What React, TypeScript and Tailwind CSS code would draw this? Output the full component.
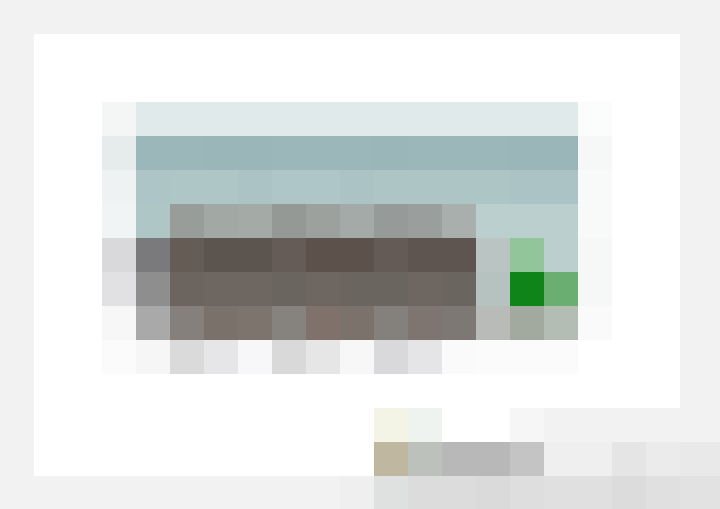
import React from 'react';

// Blurred preview thumbnail, sampled as a 34px mosaic (rows top to bottom)
const PREVIEW: string[][] = [
  ['#f4f6f6', '#e1eaea', '#e1eaea', '#e1eaea', '#e1eaea', '#e1eaea', '#e1eaea', '#e1eaea', '#e1eaea', '#e1eaea', '#e1eaea', '#e1eaea', '#e1eaea', '#e1eaea', '#fbfcfc'],
  ['#e6ecec', '#9cb7ba', '#9cb7ba', '#9bb6b9', '#9bb6b9', '#9cb7ba', '#9cb7ba', '#9cb7ba', '#9bb6b9', '#9cb7ba', '#9cb7ba', '#9cb7ba', '#9bb6b9', '#9bb6b9', '#f6f8f8'],
  ['#eef2f2', '#adc5c6', '#aec6c6', '#aec6c6', '#abc3c4', '#aec6c7', '#aec6c7', '#abc3c4', '#aec5c6', '#aec5c6', '#aec5c6', '#aec5c6', '#abc3c4', '#abc3c4', '#f8f9f9'],
  ['#f0f4f4', '#aec6c6', '#999d9a', '#a2a8a4', '#a4aaa6', '#949995', '#9ca19e', '#a4aaa8', '#969a98', '#9a9e9c', '#a9afad', '#bccfcf', '#bccfcf', '#bccfcf', '#f8f9f9'],
  ['#d9d9db', '#7a7a7c', '#655c56', '#5c544f', '#5c544f', '#655c57', '#5c524b', '#5c524b', '#645b56', '#5e5550', '#5e5550', '#b9c4c3', '#93c59a', '#bccfcf', '#f6f7f7'],
  ['#e1e1e3', '#8e8e8e', '#6c645f', '#6d6661', '#6d6661', '#6b6560', '#6d6661', '#6b6560', '#6b6560', '#6d6661', '#6b6560', '#b6c2c0', '#0f8418', '#6aae72', '#f6f7f7'],
  ['#f7f7f7', '#a9a9a9', '#86807c', '#7b716b', '#7e746e', '#86827e', '#80726b', '#7b726c', '#84807c', '#7e7470', '#7e7874', '#b9bbb8', '#a2aa9f', '#b3bdb3', '#fafafa'],
  ['#fbfbfb', '#f6f6f6', '#dadada', '#e6e6e8', '#f7f7f9', '#d9d9d9', '#e6e6e6', '#f7f7f7', '#d9d9db', '#e5e5e7', '#fafafa', '#fbfbfb', '#fbfbfb', '#fbfbfb', '#ffffff'],
];

// Floating toolbar strip in the lower right corner
const TOOLBAR: string[][] = [
  ['#f4f4e6', '#eef3f0', '#ffffff', '#ffffff', '#f6f6f6', '#f2f2f2', '#f2f2f2', '#f2f2f2', '#f2f2f2', '#f2f2f2'],
  ['#bfb79f', '#bcc1bb', '#b8b8b8', '#b8b8b8', '#c4c4c4', '#efefef', '#efefef', '#e5e5e5', '#ebebeb', '#e9e9e9'],
  ['#dfe0e0', '#dcdcdc', '#dcdcdc', '#dadada', '#dedede', '#e0e0e0', '#e0e0e0', '#dcdcdc', '#e0e0e0', '#e2e2e2'],
];

function Mosaic({ cells, cell, lastWidth }: { cells: string[][]; cell: number; lastWidth?: number }) {
  const cols = cells[0].length;
  const lw = lastWidth ?? cell;
  const width = (cols - 1) * cell + lw;
  const height = cells.length * cell;
  return (
    <svg width={width} height={height} viewBox={`0 0 ${width} ${height}`} className="block" shapeRendering="crispEdges">
      {cells.map((row, r) =>
        row.map((fill, c) => (
          <rect
            key={`${r}-${c}`}
            x={c * cell}
            y={r * cell}
            width={c === cols - 1 ? lw : cell}
            height={cell}
            fill={fill}
          />
        ))
      )}
    </svg>
  );
}

export default function App() {
  return (
    <div className="relative w-[720px] h-[509px] overflow-hidden bg-[#f2f2f2] font-['Liberation_Sans',sans-serif]">
      <div className="pt-[34px] pl-[34px]">
        {/* Main panel */}
        <div className="w-[646px] h-[442px] bg-white pt-[68px] pl-[68px]">
          <figure className="m-0">
            <Mosaic cells={PREVIEW} cell={34} />
          </figure>
        </div>
      </div>

      {/* Overlay toolbar */}
      <div className="absolute left-[374px] top-[408px]">
        <Mosaic cells={TOOLBAR} cell={34} lastWidth={40} />
      </div>
      <div className="absolute left-[340px] top-[476px] w-[34px] h-[33px] bg-[#efefef]" />
    </div>
  );
}
